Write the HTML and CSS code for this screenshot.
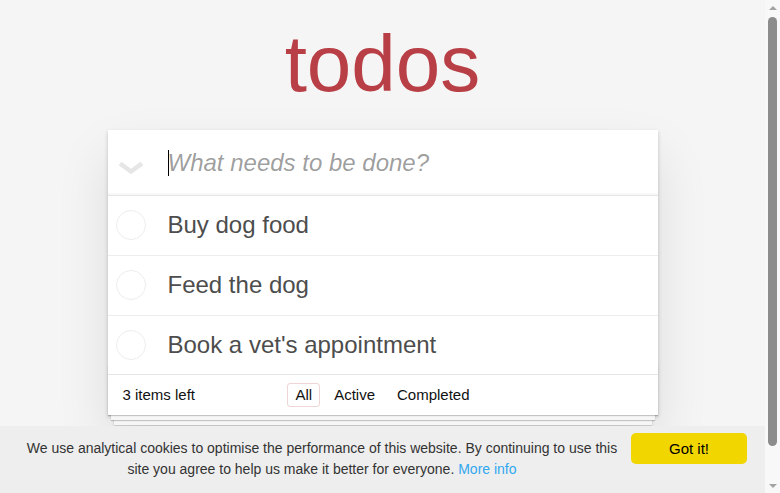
FILE: index.html
```html
<!DOCTYPE html>
<html lang="en">
<head>
<meta charset="utf-8">
<title>todos</title>
<link rel="stylesheet" href="styles.css">
</head>
<body>
<div class="page">
  <h1 class="title">todos</h1>
  <section class="todoapp">
    <header class="new-row">
      <label class="toggle-all" for="new-todo">
        <svg width="26" height="12" viewBox="0 0 26 12" aria-hidden="true"><path d="M2 1.5 L13 9.5 L24 1.5" fill="none" stroke="#e6e6e6" stroke-width="4.5" stroke-linejoin="miter"/></svg>
      </label>
      <span class="caret"></span>
      <input class="new-todo" id="new-todo" placeholder="What needs to be done?">
    </header>
    <section class="main">
      <ul class="todo-list">
        <li class="todo">
          <span class="check"><svg width="30" height="30" viewBox="0 0 30 30" aria-hidden="true"><circle cx="15" cy="15" r="14.5" fill="none" stroke="#ededed" stroke-width="1"/></svg></span>
          <label class="todo-label">Buy dog food</label>
        </li>
        <li class="todo">
          <span class="check"><svg width="30" height="30" viewBox="0 0 30 30" aria-hidden="true"><circle cx="15" cy="15" r="14.5" fill="none" stroke="#ededed" stroke-width="1"/></svg></span>
          <label class="todo-label">Feed the dog</label>
        </li>
        <li class="todo">
          <span class="check"><svg width="30" height="30" viewBox="0 0 30 30" aria-hidden="true"><circle cx="15" cy="15" r="14.5" fill="none" stroke="#ededed" stroke-width="1"/></svg></span>
          <label class="todo-label">Book a vet's appointment</label>
        </li>
      </ul>
    </section>
    <footer class="footer">
      <span class="todo-count"><strong>3</strong> items left</span>
      <ul class="filters"><li><a class="selected" href="#/">All</a></li><li><a href="#/active">Active</a></li><li><a href="#/completed">Completed</a></li></ul>
      <span class="spacer"></span>
    </footer>
  </section>
</div>
<div class="cookie">
  <p class="cookie-msg">We use analytical cookies to optimise the performance of this website. By continuing to use this site you agree to help us make it better for everyone. <a class="cookie-link" href="#">More info</a></p>
  <button class="cookie-btn" type="button">Got it!</button>
</div>
<div class="scrollbar" aria-hidden="true">
  <span class="sb-arrow sb-up"></span>
  <span class="sb-track"><span class="sb-thumb"></span></span>
  <span class="sb-arrow sb-down"></span>
</div>
</body>
</html>
```

FILE: styles.css
```css
html, body {
  margin: 0;
  padding: 0;
}

body {
  background: #f5f5f5;
  font-family: "Liberation Sans", Arial, Helvetica, sans-serif;
  font-size: 14px;
  line-height: 1.4em;
  color: #111111;
  padding-right: 15px;
}

.page {
  width: 550px;
  margin: 0 auto;
  padding-bottom: 116px;
}

.title {
  margin: 24px 0 26px;
  font-size: 80px;
  line-height: 80px;
  font-weight: 200;
  text-align: center;
  color: #b83f45;
}

.todoapp {
  position: relative;
  background: #fff;
  box-shadow: 0 2px 4px 0 rgba(0, 0, 0, 0.2), 0 25px 50px 0 rgba(0, 0, 0, 0.1);
}

.new-row {
  display: flex;
  align-items: center;
  height: 65px;
  box-shadow: inset 0 -2px 1px rgba(0, 0, 0, 0.03);
}

.toggle-all {
  width: 60px;
  flex-shrink: 0;
  align-self: stretch;
  display: flex;
  align-items: center;
  box-sizing: border-box;
  padding-left: 10px;
}

.toggle-all svg {
  display: block;
  margin-top: 10px;
}

.caret {
  width: 1px;
  height: 26px;
  margin-right: -1px;
  background: #000;
  flex-shrink: 0;
  position: relative;
  z-index: 1;
}

.new-todo {
  flex: 1;
  min-width: 0;
  height: 100%;
  border: none;
  outline: none;
  padding: 0 16px 0 0;
  margin: 0;
  background: transparent;
  font-family: inherit;
  font-size: 24px;
  color: #4d4d4d;
}

.new-todo::placeholder {
  font-style: italic;
  font-weight: 400;
  color: rgba(0, 0, 0, 0.4);
}

.main {
  border-top: 1px solid #e6e6e6;
}

.todo-list {
  list-style: none;
  margin: 0;
  padding: 0;
}

.todo {
  display: flex;
  align-items: center;
  border-bottom: 1px solid #ededed;
  font-size: 24px;
}

.todo:last-child {
  border-bottom: none;
}

.check {
  width: 60px;
  flex-shrink: 0;
  box-sizing: border-box;
  padding-left: 8px;
  display: flex;
  align-items: center;
}

.check svg {
  display: block;
}

.todo-label {
  display: block;
  padding: 15px 15px 15px 0;
  line-height: 1.2;
  color: #4d4d4d;
}

.footer {
  position: relative;
  display: grid;
  grid-template-columns: 1fr auto 1fr;
  align-items: center;
  height: 20px;
  padding: 10px 15px;
  border-top: 1px solid #e6e6e6;
  font-size: 15px;
  line-height: 20px;
  color: #111;
}

.footer::before {
  content: '';
  position: absolute;
  right: 0;
  bottom: 0;
  left: 0;
  height: 50px;
  overflow: hidden;
  box-shadow: 0 1px 1px rgba(0, 0, 0, 0.2),
              0 8px 0 -3px #f6f6f6,
              0 9px 1px -3px rgba(0, 0, 0, 0.2),
              0 16px 0 -6px #f6f6f6,
              0 17px 2px -6px rgba(0, 0, 0, 0.2);
  pointer-events: none;
}

.todo-count {
  text-align: left;
}

.todo-count strong {
  font-weight: 400;
}

.filters {
  display: flex;
  align-items: center;
  list-style: none;
  margin: 0;
  padding: 0;
  height: 20px;
}

.filters li {
  display: block;
}

.filters a {
  display: block;
  color: inherit;
  margin: 0 3px;
  padding: 3px 7px;
  text-decoration: none;
  border: 1px solid transparent;
  border-radius: 3px;
  line-height: 16px;
}

.filters a.selected {
  border-color: rgba(175, 47, 47, 0.2);
}

.cookie {
  position: fixed;
  left: 0;
  right: 15px;
  bottom: 0;
  height: 67px;
  box-sizing: border-box;
  display: flex;
  align-items: flex-start;
  padding: 0 18px 0 15px;
  background: #eeeeee;
  color: #333333;
  font-size: 14px;
  line-height: 21px;
  z-index: 10;
}

.cookie-msg {
  flex: 1;
  margin: 0;
  padding-top: 12px;
  text-align: center;
}

.cookie-link {
  color: #31a8f0;
  text-decoration: none;
}

.cookie-btn {
  flex-shrink: 0;
  width: 116px;
  height: 31px;
  margin: 7px 0 0 2px;
  border: none;
  border-radius: 5px;
  background: #f1d600;
  color: #000;
  font-family: inherit;
  font-size: 15px;
  cursor: pointer;
}

.scrollbar {
  position: fixed;
  top: 0;
  right: 0;
  bottom: 0;
  width: 15px;
  display: flex;
  flex-direction: column;
  background: #f8f8f8;
  z-index: 20;
}

.sb-arrow {
  height: 15px;
  flex-shrink: 0;
  display: flex;
  align-items: center;
  justify-content: center;
}

.sb-arrow::before {
  content: '';
  width: 0;
  height: 0;
  border-left: 4px solid transparent;
  border-right: 4px solid transparent;
}

.sb-up::before {
  border-bottom: 4px solid #a3a3a3;
}

.sb-down::before {
  border-top: 4px solid #a3a3a3;
}

.sb-track {
  flex: 1;
  display: flex;
  flex-direction: column;
  align-items: center;
  padding-top: 2px;
}

.sb-thumb {
  width: 9px;
  height: 429px;
  border-radius: 5px;
  background: #8c8c8c;
}
```
